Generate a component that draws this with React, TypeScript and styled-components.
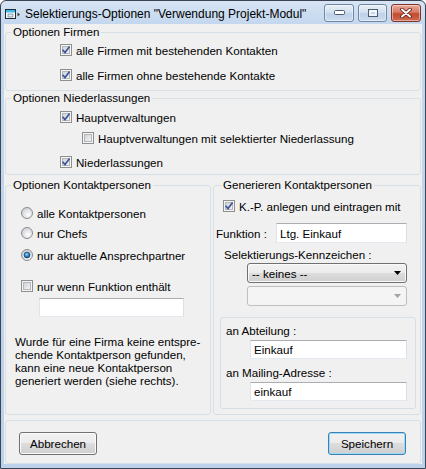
import React from 'react';
import styled, { createGlobalStyle } from 'styled-components';

const UI_FONT = '"Liberation Sans", Arial, sans-serif';

const GlobalStyle = createGlobalStyle`
  * { box-sizing: border-box; }
  html, body { margin: 0; padding: 0; background: #ffffff; }
  body {
    font-family: ${UI_FONT};
    font-size: 11.6px;
    color: #000;
  }
`;

const Window = styled.div`
  width: 426px;
  height: 469px;
  display: flex;
  flex-direction: column;
  border: 1px solid #3b4454;
  border-radius: 6px 6px 0 0;
  background: linear-gradient(#d7e4f4 0, #c3d7ee 23px, #bcd1ea 100%);
  overflow: hidden;
`;

const TitleBar = styled.div`
  height: 23px;
  flex: none;
  display: flex;
  align-items: center;
  padding: 0 4px 0 4px;
`;

const TitleIcon = styled.svg`
  flex: none;
  margin: 3px 4px 0 0;
`;

const TitleText = styled.div`
  flex: 1;
  padding-top: 2px;
  font-size: 12px;
  white-space: nowrap;
`;

const CaptionButtons = styled.div`
  display: flex;
  gap: 4px;
`;

const CaptionButton = styled.div<{ $close?: boolean; $w: number }>`
  width: ${p => p.$w}px;
  height: 18px;
  display: flex;
  align-items: center;
  justify-content: center;
  border-radius: 3px;
  border: 1px solid ${p => (p.$close ? '#7e3426' : '#6f86a6')};
  background: ${p =>
    p.$close
      ? 'linear-gradient(#e8a99b 0%, #d77a66 45%, #c2492f 55%, #cf6a52 100%)'
      : 'linear-gradient(#e9f0f8 0%, #d3e0ef 45%, #bed1e8 55%, #cddcee 100%)'};
  box-shadow: inset 0 0 0 1px rgba(255, 255, 255, 0.45);
`;

const Client = styled.div`
  flex: 1;
  margin: 0 3px 4px;
  padding: 1px 1px 0;
  background: #f0f0f0;
  display: flex;
  flex-direction: column;
`;

const GroupBox = styled.fieldset<{ $pb?: number; $mt?: number; $w?: number }>`
  margin: ${p => p.$mt ?? 0}px 0 0;
  padding: 0 0 ${p => p.$pb ?? 0}px;
  border: 1px solid #d5dfe5;
  border-radius: 3px;
  min-width: 0;
  ${p => (p.$w ? `width: ${p.$w}px; flex: none;` : '')}
`;

const Caption = styled.legend<{ $indent?: number }>`
  margin-left: ${p => p.$indent ?? 5}px;
  padding: 0 2px;
  line-height: 14px;
`;

const Row = styled.div<{ $top?: number; $left?: number; $h?: number; $gap?: number }>`
  display: flex;
  align-items: center;
  height: ${p => p.$h ?? 18}px;
  margin-top: ${p => p.$top ?? 0}px;
  padding-left: ${p => p.$left ?? 0}px;
  gap: ${p => p.$gap ?? 4}px;
  white-space: nowrap;
`;

const FieldLabel = styled.span<{ $w?: number }>`
  ${p => (p.$w ? `width: ${p.$w}px; flex: none;` : '')}
`;

const TextBox = styled.input<{ $w: number; $h?: number }>`
  width: ${p => p.$w}px;
  height: ${p => p.$h ?? 19}px;
  margin: 0;
  padding: 0 0 0 3px;
  font: inherit;
  color: #000;
  background: #fff;
  border: 1px solid;
  border-color: #abadb3 #dbdfe6 #e3e9ef #e2e3ea;
  border-radius: 0;
  outline: none;
`;

const Combo = styled.div<{ $disabled?: boolean }>`
  width: 160px;
  height: 20px;
  display: flex;
  align-items: center;
  justify-content: space-between;
  padding: 0 5px 0 4px;
  border-radius: 3px;
  border: 1px solid ${p => (p.$disabled ? '#bcc0c4' : '#707070')};
  background: ${p =>
    p.$disabled
      ? '#f4f4f4'
      : 'linear-gradient(#f2f2f2 0%, #ebebeb 50%, #dddddd 50%, #cfcfcf 100%)'};
  box-shadow: inset 0 0 0 1px ${p => (p.$disabled ? '#f4f4f4' : '#fafafa')};
`;

const Columns = styled.div`
  display: flex;
  gap: 2px;
  margin-top: 3px;
  height: 237px;
`;

const Note = styled.p`
  margin: 18px 0 0;
  padding-left: 9px;
  line-height: 13px;
`;

const AddressBox = styled.div`
  width: 196px;
  margin: 11px 0 0 6px;
  padding-bottom: 7px;
  border: 1px solid #d5dfe5;
  border-radius: 3px;
`;

const ButtonPanel = styled.div`
  margin-top: 5px;
  height: 44px;
  display: flex;
  justify-content: space-between;
  align-items: flex-start;
  padding: 11px 14px 0 13px;
  border: 1px solid #d5dfe5;
  border-radius: 3px;
`;

const PushButton = styled.button<{ $default?: boolean }>`
  width: 78px;
  height: 23px;
  padding: 0;
  font: inherit;
  color: #000;
  border-radius: 3px;
  border: 1px solid ${p => (p.$default ? '#3c7fb1' : '#707070')};
  background: linear-gradient(#f2f2f2 0%, #ebebeb 50%, #dddddd 50%, #cfcfcf 100%);
  box-shadow: inset 0 0 0 1px ${p => (p.$default ? '#9bdcf8' : '#fbfbfb')};
`;

const Glyph = styled.svg`
  flex: none;
  display: block;
`;

const CheckBox = ({ checked }: { checked?: boolean }) => (
  <Glyph width="12" height="12" viewBox="0 0 12 12">
    <defs>
      <linearGradient id="cbFill" x1="0" y1="0" x2="1" y2="1">
        <stop offset="0" stopColor="#cdd1d6" />
        <stop offset="1" stopColor="#f6f6f6" />
      </linearGradient>
    </defs>
    <rect x="0.5" y="0.5" width="11" height="11" fill="#f5f5f5" stroke="#8e8f8f" />
    <rect x="2.5" y="2.5" width="7" height="7" fill="url(#cbFill)" stroke="#b3b6ba" />
    {checked && (
      <path d="M2.6 5.8 L5 8.6 L9.6 2.6" fill="none" stroke="#40589a" strokeWidth="1.7" />
    )}
  </Glyph>
);

const Radio = ({ checked }: { checked?: boolean }) => (
  <Glyph width="12" height="12" viewBox="0 0 12 12">
    <defs>
      <radialGradient id="rbFill" cx="0.6" cy="0.65" r="0.7">
        <stop offset="0" stopColor="#ffffff" />
        <stop offset="1" stopColor="#c9ccd1" />
      </radialGradient>
      <radialGradient id="rbDot" cx="0.45" cy="0.4" r="0.6">
        <stop offset="0" stopColor="#9ee0ff" />
        <stop offset="0.55" stopColor="#2a86cc" />
        <stop offset="1" stopColor="#0d3c6e" />
      </radialGradient>
    </defs>
    <circle cx="6" cy="6" r="5.5" fill="url(#rbFill)" stroke="#8b8c8e" />
    {checked && <circle cx="6" cy="6" r="3" fill="url(#rbDot)" stroke="#173e66" strokeWidth="0.6" />}
  </Glyph>
);

const DropArrow = ({ color }: { color: string }) => (
  <Glyph width="7" height="4" viewBox="0 0 7 4">
    <path d="M0 0 H7 L3.5 4 Z" fill={color} />
  </Glyph>
);

const App = () => (
  <>
    <GlobalStyle />
    <Window>
      <TitleBar>
        <TitleIcon width="16" height="11" viewBox="0 0 16 11">
          <rect x="0.5" y="0.5" width="10" height="9" fill="#ffffff" stroke="#1f2935" />
          <rect x="1" y="1" width="9" height="2.5" fill="#39bde4" />
          <rect x="3" y="5" width="5" height="3" fill="#d7e9f4" stroke="#5b6b7c" strokeWidth="0.6" />
          <path d="M12.5 3.5 L15 5.5 L12.5 7.5 Z" fill="#3a3a3a" />
        </TitleIcon>
        <TitleText>Selektierungs-Optionen "Verwendung Projekt-Modul"</TitleText>
        <CaptionButtons>
          <CaptionButton $w={30}>
            <Glyph width="11" height="5" viewBox="0 0 11 5">
              <rect x="0.5" y="0.5" width="10" height="4" rx="1" fill="#ffffff" stroke="#4c5b70" />
            </Glyph>
          </CaptionButton>
          <CaptionButton $w={29}>
            <Glyph width="10" height="8" viewBox="0 0 10 8">
              <rect x="0.5" y="0.5" width="9" height="7" fill="none" stroke="#4c5b70" />
              <rect x="2" y="2" width="6" height="4" fill="none" stroke="#ffffff" strokeWidth="1.4" />
            </Glyph>
          </CaptionButton>
          <CaptionButton $w={30} $close>
            <Glyph width="12" height="10" viewBox="0 0 12 10">
              <path d="M2 1.5 L10 8.5 M10 1.5 L2 8.5" stroke="#5a1a10" strokeWidth="3.6" strokeLinecap="round" />
              <path d="M2 1.5 L10 8.5 M10 1.5 L2 8.5" stroke="#ffffff" strokeWidth="2" strokeLinecap="round" />
            </Glyph>
          </CaptionButton>
        </CaptionButtons>
      </TitleBar>

      <Client>
        <GroupBox $pb={6}>
          <Caption>Optionen Firmen</Caption>
          <Row $top={2} $left={54}>
            <CheckBox checked />
            <span>alle Firmen mit bestehenden Kontakten</span>
          </Row>
          <Row $top={7} $left={54}>
            <CheckBox checked />
            <span>alle Firmen ohne bestehende Kontakte</span>
          </Row>
        </GroupBox>

        <GroupBox $pb={3}>
          <Caption>Optionen Niederlassungen</Caption>
          <Row $top={3} $left={54}>
            <CheckBox checked />
            <span>Hauptverwaltungen</span>
          </Row>
          <Row $top={3} $left={76}>
            <CheckBox />
            <span>Hauptverwaltungen mit selektierter Niederlassung</span>
          </Row>
          <Row $top={6} $left={54}>
            <CheckBox checked />
            <span>Niederlassungen</span>
          </Row>
        </GroupBox>

        <Columns>
          <GroupBox $w={206}>
            <Caption>Optionen Kontaktpersonen</Caption>
            <Row $top={12} $left={15}>
              <Radio />
              <span>alle Kontaktpersonen</span>
            </Row>
            <Row $top={2} $left={15}>
              <Radio />
              <span>nur Chefs</span>
            </Row>
            <Row $top={4} $left={15}>
              <Radio checked />
              <span>nur aktuelle Ansprechpartner</span>
            </Row>
            <Row $top={13} $left={15}>
              <CheckBox />
              <span>nur wenn Funktion enthält</span>
            </Row>
            <Row $top={3} $left={33} $h={19}>
              <TextBox $w={145} readOnly defaultValue="" />
            </Row>
            <Note>
              Wurde für eine Firma keine entspre-
              <br />
              chende Kontaktperson gefunden,
              <br />
              kann eine neue Kontaktperson
              <br />
              generiert werden (siehe rechts).
            </Note>
          </GroupBox>

          <GroupBox $w={208}>
            <Caption $indent={7}>Generieren Kontaktpersonen</Caption>
            <Row $top={5} $left={9}>
              <CheckBox checked />
              <span>K.-P. anlegen und eintragen mit</span>
            </Row>
            <Row $top={8} $left={2} $h={20} $gap={0}>
              <FieldLabel $w={60}>Funktion :</FieldLabel>
              <TextBox $w={131} $h={20} readOnly defaultValue="Ltg. Einkauf" />
            </Row>
            <Row $top={3} $left={10} $h={16}>
              <span>Selektierungs-Kennzeichen :</span>
            </Row>
            <Row $top={1} $left={33} $h={20}>
              <Combo>
                <span>-- keines --</span>
                <DropArrow color="#000000" />
              </Combo>
            </Row>
            <Row $top={3} $left={33} $h={20}>
              <Combo $disabled>
                <span />
                <DropArrow color="#a2a4a7" />
              </Combo>
            </Row>
            <AddressBox>
              <Row $top={4} $left={5} $h={16}>
                <span>an Abteilung :</span>
              </Row>
              <Row $top={2} $left={29} $h={19}>
                <TextBox $w={157} readOnly defaultValue="Einkauf" />
              </Row>
              <Row $top={5} $left={5} $h={16}>
                <span>an Mailing-Adresse :</span>
              </Row>
              <Row $top={2} $left={29} $h={19}>
                <TextBox $w={157} readOnly defaultValue="einkauf" />
              </Row>
            </AddressBox>
          </GroupBox>
        </Columns>

        <ButtonPanel>
          <PushButton>Abbrechen</PushButton>
          <PushButton $default>Speichern</PushButton>
        </ButtonPanel>
      </Client>
    </Window>
  </>
);

export default App;
